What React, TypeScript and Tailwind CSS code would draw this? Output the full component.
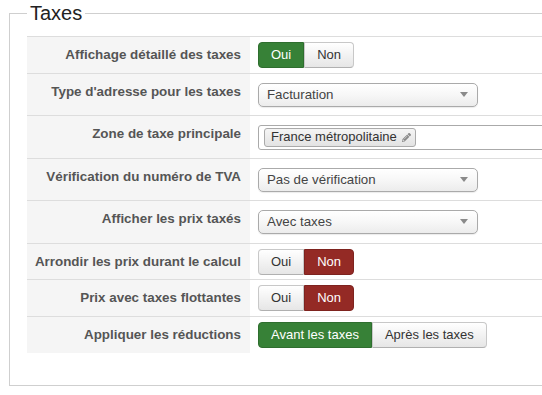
import { FaPencilAlt } from "react-icons/fa";

type Row =
  | { label: string; h: string; kind: "toggle"; options: string[]; active: number; tone: "green" | "red" }
  | { label: string; h: string; kind: "select"; value: string }
  | { label: string; h: string; kind: "tags"; value: string };

const rows: Row[] = [
  { label: "Affichage détaillé des taxes", h: "h-[37px]", kind: "toggle", options: ["Oui", "Non"], active: 0, tone: "green" },
  { label: "Type d'adresse pour les taxes", h: "h-[42px]", kind: "select", value: "Facturation" },
  { label: "Zone de taxe principale", h: "h-[43px]", kind: "tags", value: "France métropolitaine" },
  { label: "Vérification du numéro de TVA", h: "h-[42px]", kind: "select", value: "Pas de vérification" },
  { label: "Afficher les prix taxés", h: "h-[43px]", kind: "select", value: "Avec taxes" },
  { label: "Arrondir les prix durant le calcul", h: "h-[36px]", kind: "toggle", options: ["Oui", "Non"], active: 1, tone: "red" },
  { label: "Prix avec taxes flottantes", h: "h-[37px]", kind: "toggle", options: ["Oui", "Non"], active: 1, tone: "red" },
  { label: "Appliquer les réductions", h: "h-[37px]", kind: "toggle", options: ["Avant les taxes", "Après les taxes"], active: 0, tone: "green" },
];

function Toggle({ options, active, tone }: { options: string[]; active: number; tone: "green" | "red" }) {
  return (
    <div className="flex">
      {options.map((opt, i) => {
        const on = i === active;
        const edge = i === 0 ? "rounded-l-[4px]" : "rounded-r-[4px]";
        const look = on
          ? tone === "green"
            ? "bg-[#378137] border-[#2f6e2f] text-white"
            : "bg-[#942a25] border-[#7e231f] text-white"
          : "bg-gradient-to-b from-white to-[#e6e6e6] border-[#c8c8c8] border-b-[#b0b0b0] text-[#333]";
        return (
          <span key={opt} className={`h-[26px] px-3 flex items-center border text-[13px] ${edge} ${look}`}>
            {opt}
          </span>
        );
      })}
    </div>
  );
}

function Select({ value }: { value: string }) {
  return (
    <div className="w-[220px] h-[24px] rounded-[5px] border border-[#aaa] bg-gradient-to-b from-white via-[#f7f7f7] to-[#ececec] shadow-[0_1px_1px_rgba(0,0,0,0.08)] flex items-center justify-between pl-[8px] pr-[9px] text-[13.3px] text-[#444]">
      <span>{value}</span>
      <svg width="8" height="6" viewBox="0 0 8 6">
        <polygon points="0,0 8,0 4,5" fill="#8a8a8a" />
      </svg>
    </div>
  );
}

function Tags({ value }: { value: string }) {
  return (
    <div className="w-[300px] h-[25px] border border-[#aaa] rounded-[3px] bg-white flex items-center pl-[5px]">
      <span className="h-[19px] border border-[#aaa] rounded-[3px] bg-gradient-to-b from-[#f5f5f5] to-[#e3e3e3] pl-[6px] pr-[4px] flex items-center gap-[5px] text-[13px] text-[#333]">
        {value}
        <FaPencilAlt className="w-[9px] h-[9px] text-[#888]" />
      </span>
    </div>
  );
}

export default function App() {
  return (
    <div className="w-[542px] h-[395px] overflow-hidden bg-white font-['Liberation_Sans',Arial,sans-serif]">
      <div className="pl-[9px]">
        <fieldset className="w-[620px] border border-[#cfcfcf] pl-[17px] pb-[32px]">
          <legend className="px-[3px] text-[20px] leading-[26px] text-[#222]">Taxes</legend>
          <div className="mt-[10px]">
            {rows.map((row) => (
              <div key={row.label} className={`flex border-t border-[#ddd] ${row.h}`}>
                <div className="w-[223px] shrink-0 bg-[#f5f5f5] text-right pr-[9px] pt-[9px] font-bold text-[13.4px] leading-[18px] text-[#555]">
                  {row.label}
                </div>
                <div className="flex-1 flex items-center pl-[8px]">
                  {row.kind === "toggle" && <Toggle options={row.options} active={row.active} tone={row.tone} />}
                  {row.kind === "select" && <Select value={row.value} />}
                  {row.kind === "tags" && <Tags value={row.value} />}
                </div>
              </div>
            ))}
          </div>
        </fieldset>
      </div>
    </div>
  );
}
